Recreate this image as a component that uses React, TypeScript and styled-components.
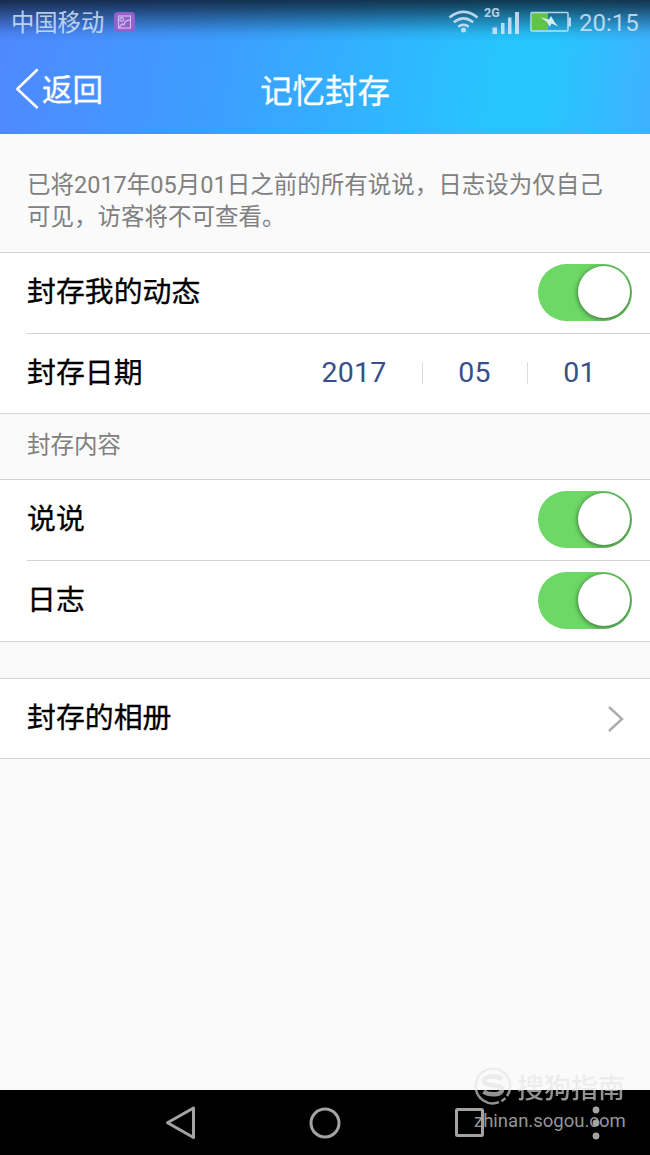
import React from "react";
import styled, { createGlobalStyle } from "styled-components";

const GlobalStyle = createGlobalStyle`
  * { box-sizing: border-box; }
  body {
    margin: 0;
    background: #fafafa;
    font-family: Roboto, "Noto Sans CJK SC", sans-serif;
  }
`;

const Screen = styled.div`
  position: relative;
  width: 650px;
  height: 1155px;
  display: flex;
  flex-direction: column;
  overflow: hidden;
  background: #fafafa;
`;

const Header = styled.header`
  flex: none;
  height: 134px;
  display: flex;
  flex-direction: column;
  background:
    linear-gradient(180deg, rgba(10, 20, 36, 0.8) 0, rgba(10, 20, 36, 0.64) 8px, rgba(10, 20, 36, 0.36) 20px, rgba(10, 20, 36, 0.08) 33px, rgba(10, 20, 36, 0) 42px),
    linear-gradient(98deg, #5088ff 0%, #3d9dff 33%, #27c5ff 76%, #27c5ff 84%, #3fb1ff 100%);
`;

const StatusBar = styled.div`
  height: 44px;
  display: flex;
  align-items: center;
  padding: 0 11px 0 11px;
  color: rgba(224, 238, 255, 0.8);
`;

const Carrier = styled.span`
  font-size: 23.3px;
  line-height: 42px;
  padding-top: 2px;
  margin-right: 10px;
`;

const StatusIcons = styled.div`
  display: flex;
  align-items: center;
  margin-left: auto;
`;

const Clock = styled.span`
  font-size: 24px;
  line-height: 42px;
  padding-top: 2px;
  width: 60px;
  margin-left: 8px;
  white-space: nowrap;
`;

const NavBar = styled.div`
  height: 90px;
  display: grid;
  grid-template-columns: 200px 1fr 200px;
  align-items: center;
  color: #fff;
  -webkit-text-stroke: 0.3px currentColor;
`;

const BackButton = styled.button`
  display: flex;
  align-items: center;
  gap: 3px;
  padding: 0 0 0 15px;
  border: 0;
  background: none;
  color: inherit;
  font: inherit;
  font-size: 30.5px;
  line-height: 44px;
`;

const BackLabel = styled.span`
  padding-top: 4px;
`;

const Title = styled.h1`
  margin: 6px 0 0;
  text-align: center;
  font-size: 32.4px;
  line-height: 48px;
  font-weight: 400;
`;

const Notice = styled.p`
  margin: 0;
  height: 118px;
  padding: 35px 27px 0;
  font-size: 23.5px;
  line-height: 32px;
  color: #808080;
  white-space: nowrap;
`;

const Group = styled.section`
  background: #fff;
  border-top: 1px solid #d3d3d3;
  border-bottom: 1px solid #d3d3d3;
`;

const Row = styled.div<{ $height?: number }>`
  height: ${(p) => p.$height ?? 80}px;
  margin-left: 27px;
  padding-right: 18px;
  display: flex;
  align-items: center;
  justify-content: space-between;

  & + & {
    border-top: 1px solid #d3d3d3;
  }
`;

const Label = styled.span`
  font-size: 28.9px;
  line-height: 40px;
  color: #000;
  padding-bottom: 2px;
  -webkit-text-stroke: 0.3px currentColor;
`;

const SectionTitle = styled.h2`
  margin: 0;
  height: 65px;
  padding: 14px 27px 0;
  font-size: 23.5px;
  line-height: 34px;
  font-weight: 400;
  color: #808080;
`;

const Spacer = styled.div`
  height: 36px;
`;

const Track = styled.button`
  width: 94px;
  height: 57px;
  margin-bottom: 2px;
  padding: 0 2px 0 0;
  border: 0;
  border-radius: 29px;
  overflow: hidden;
  background: #6dd865;
  display: flex;
  align-items: center;
  justify-content: flex-end;
`;

const Thumb = styled.span`
  width: 52px;
  height: 52px;
  border-radius: 50%;
  background: #fff;
  box-shadow: 0 1px 4px 1px rgba(50, 90, 50, 0.7);
`;

const DateFields = styled.div`
  display: flex;
  align-items: center;
  margin-bottom: 2px;
  font-size: 28.5px;
  line-height: 40px;
  color: #38508a;
`;

const DatePart = styled.span<{ $width: number }>`
  width: ${(p) => p.$width}px;
  text-align: center;
  letter-spacing: 0.2px;

  & + & {
    background: linear-gradient(#dcdcdc, #dcdcdc) left center / 1px 22px no-repeat;
  }
`;

const Chevron = styled.svg`
  margin-right: 8px;
`;

const SystemNav = styled.nav`
  margin-top: auto;
  flex: none;
  height: 65px;
  background: #000;
  display: flex;
  align-items: center;
  padding-left: 165px;
  color: #a3a3a3;
`;

const NavIcon = styled.svg<{ $gap?: number }>`
  flex: none;
  margin-left: ${(p) => p.$gap ?? 0}px;
`;

const Watermark = styled.div`
  position: absolute;
  left: 474px;
  top: 1065px;
  width: 160px;
`;

const WatermarkBrand = styled.div`
  display: flex;
  align-items: center;
  gap: 4px;
  height: 42px;
  font-size: 27px;
  font-weight: 500;
  white-space: nowrap;
  color: transparent;
  background: linear-gradient(180deg, #ececec 25px, #929292 25px);
  background-clip: text;
  -webkit-background-clip: text;
`;

const WatermarkUrl = styled.div`
  margin-top: 1px;
  font-family: Roboto, sans-serif;
  font-size: 18.5px;
  line-height: 26px;
  color: rgba(170, 170, 170, 0.9);
`;

function Toggle({ label }: { label: string }) {
  return (
    <Track type="button" role="switch" aria-checked aria-label={label}>
      <Thumb />
    </Track>
  );
}

function PictureIcon() {
  return (
    <svg width="21" height="21" viewBox="0 0 21 21" fill="none">
      <rect y="0" width="21" height="20" rx="4" fill="#9460cb" />
      <g stroke="#d5bdf0" strokeWidth="1.2">
        <rect x="4.5" y="4" width="12" height="12" />
        <circle cx="7.7" cy="7.4" r="1.8" />
        <path d="M5 15.5 8 12 10 12.8C10.6 9.4 12.6 8.2 16 8.2" />
      </g>
    </svg>
  );
}

function WifiIcon() {
  return (
    <svg width="31" height="24" viewBox="0 0 32 24" fill="none" stroke="currentColor" strokeWidth="2.7">
      <path d="M1.5 7.3Q16-4.3 30.5 7.3M6 12.3Q16 4.2 26 12.3M10.5 17Q16 12.7 21.5 17" />
      <circle cx="16" cy="20.3" r="2.6" fill="currentColor" stroke="none" />
    </svg>
  );
}

const SignalSvg = styled.svg`
  margin: 0 10px 4px 5px;
`;

function SignalIcon() {
  return (
    <SignalSvg width="36" height="28" viewBox="0 0 36 28" fill="currentColor">
      <text x="0" y="11" fontFamily="Roboto, sans-serif" fontSize="12.5" fontWeight="700">2G</text>
      <path d="M8.5 21.5h4.5V28H8.500zM17 17h3.500v11H17zM24 11.500h3.500V28H24zM31 6h4v22h-4z" />
    </SignalSvg>
  );
}

function BatteryIcon() {
  return (
    <svg width="41" height="22" viewBox="0 0 41 22" fill="none">
      <rect x="2" y="2" width="16" height="17" fill="#60c44b" />
      <rect x="1" y="1.5" width="37" height="18.5" rx="1" stroke="currentColor" strokeWidth="1.5" />
      <path d="M38.5 6.5H41v9h-2.5z" fill="currentColor" />
      <path d="m10.500 6.300 8.500 2.200L21 5l3.500 6L28 15.500l-6.500-3-1.800 3.500-2.700-5z" fill="#d6edf3" />
    </svg>
  );
}

export default function App() {
  return (
    <Screen>
      <GlobalStyle />
      <Header>
        <StatusBar>
          <Carrier>中国移动</Carrier>
          <PictureIcon />
          <StatusIcons>
            <WifiIcon />
            <SignalIcon />
            <BatteryIcon />
            <Clock>20:15</Clock>
          </StatusIcons>
        </StatusBar>
        <NavBar>
          <BackButton type="button">
            <svg width="24" height="42" viewBox="0 0 24 42" fill="none" stroke="currentColor" strokeWidth="2.5" strokeLinecap="round" strokeLinejoin="round">
              <path d="M22 2 2.3 21 22 39.5" />
            </svg>
            <BackLabel>返回</BackLabel>
          </BackButton>
          <Title>记忆封存</Title>
        </NavBar>
      </Header>

      <Notice>
        已将2017年05月01日之前的所有说说，日志设为仅自己
        <br />
        可见，访客将不可查看。
      </Notice>

      <Group>
        <Row>
          <Label>封存我的动态</Label>
          <Toggle label="封存我的动态" />
        </Row>
        <Row>
          <Label>封存日期</Label>
          <DateFields>
            <DatePart $width={136}>2017</DatePart>
            <DatePart $width={105}>05</DatePart>
            <DatePart $width={105}>01</DatePart>
          </DateFields>
        </Row>
      </Group>

      <SectionTitle>封存内容</SectionTitle>

      <Group>
        <Row>
          <Label>说说</Label>
          <Toggle label="说说" />
        </Row>
        <Row $height={81}>
          <Label>日志</Label>
          <Toggle label="日志" />
        </Row>
      </Group>

      <Spacer />

      <Group>
        <Row $height={79}>
          <Label>封存的相册</Label>
          <Chevron width="17" height="28" viewBox="0 0 17 28" fill="none" stroke="#adadad" strokeWidth="2.5">
            <path d="m2 2 13 12L2 26" />
          </Chevron>
        </Row>
      </Group>

      <SystemNav>
        <NavIcon width="32" height="36" viewBox="0 0 32 36" fill="none" stroke="currentColor" strokeWidth="3" strokeLinejoin="round">
          <path d="M28.5 3v29.5L2.5 17.8z" />
        </NavIcon>
        <NavIcon $gap={112} width="32" height="32" viewBox="0 0 32 32" fill="none" stroke="currentColor" strokeWidth="3">
          <circle cx="16" cy="16" r="14" />
        </NavIcon>
        <NavIcon $gap={114} width="29" height="29" viewBox="0 0 29 29" fill="none" stroke="currentColor" strokeWidth="3">
          <rect x="1.5" y="1.5" width="26" height="26" rx="1" />
        </NavIcon>
        <NavIcon $gap={108} width="8" height="34" viewBox="0 0 8 34" fill="currentColor">
          <circle cx="4" cy="4" r="3.4" />
          <circle cx="4" cy="17" r="3.4" />
          <circle cx="4" cy="30" r="3.4" />
        </NavIcon>
      </SystemNav>

      <Watermark>
        <WatermarkBrand>
          <svg width="39" height="42" viewBox="0 0 39 42" fill="none">
            <defs>
              <linearGradient id="brand" gradientUnits="userSpaceOnUse" x1="0" y1="0" x2="0" y2="42">
                <stop offset="0.595" stopColor="#ececec" />
                <stop offset="0.595" stopColor="#929292" />
              </linearGradient>
            </defs>
            <path d="M25 37.2A17.3 17.3 0 1 1 33 31M27.5 36.3l4-3.2" stroke="url(#brand)" strokeWidth="2.4" />
            <path d="M28 14C23 10.5 10 10 10 16.2 10 22 28 18.5 28 24.5 28 30.5 15 30.5 9.5 26.5" stroke="url(#brand)" strokeWidth="4.6" />
          </svg>
          搜狗指南
        </WatermarkBrand>
        <WatermarkUrl>zhinan.sogou.com</WatermarkUrl>
      </Watermark>
    </Screen>
  );
}
